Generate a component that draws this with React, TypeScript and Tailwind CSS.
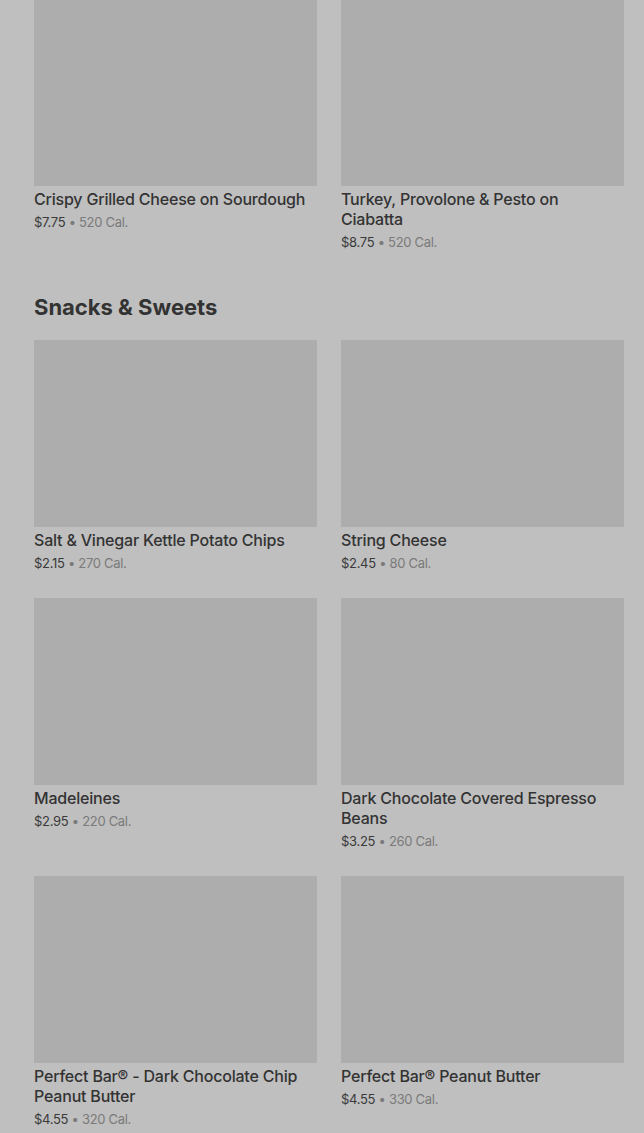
interface Item {
  name: string
  price: string
  cal: string
}

const topItems: Item[] = [
  { name: 'Crispy Grilled Cheese on Sourdough', price: '$7.75', cal: '520 Cal.' },
  { name: 'Turkey, Provolone & Pesto on Ciabatta', price: '$8.75', cal: '520 Cal.' },
]

const snacks: Item[] = [
  { name: 'Salt & Vinegar Kettle Potato Chips', price: '$2.15', cal: '270 Cal.' },
  { name: 'String Cheese', price: '$2.45', cal: '80 Cal.' },
  { name: 'Madeleines', price: '$2.95', cal: '220 Cal.' },
  { name: 'Dark Chocolate Covered Espresso Beans', price: '$3.25', cal: '260 Cal.' },
  { name: 'Perfect Bar® - Dark Chocolate Chip Peanut Butter', price: '$4.55', cal: '320 Cal.' },
  { name: 'Perfect Bar® Peanut Butter', price: '$4.55', cal: '330 Cal.' },
]

function MenuCard({ name, price, cal }: Item) {
  return (
    <div className="flex flex-col pb-px">
      <div className="h-[187px] w-full bg-[#adadad]" />
      <h3 className="mt-[3px] text-[16px] leading-5 font-medium tracking-[-0.2px] text-[#333333]">
        {name}
      </h3>
      <p className="mt-[3px] text-[13px] leading-5 tracking-[-0.3px]">
        <span className="text-[#3a3a3a]">{price}</span>
        <span className="text-[#7a7a7a]"> • {cal}</span>
      </p>
    </div>
  )
}

export default function App() {
  return (
    <div
      className="min-h-[1133px] w-[644px] overflow-hidden bg-[#bfbfbf] pl-[34px] pr-5"
      style={{ fontFamily: 'Inter, "Noto Sans", sans-serif' }}
    >
      <div className="-mt-px grid grid-cols-2 gap-x-6 gap-y-6">
        {topItems.map((item) => (
          <MenuCard key={item.name} {...item} />
        ))}
      </div>

      <h2 className="mt-[38px] mb-[17px] text-[22px] leading-8 font-bold text-[#333333]">
        Snacks &amp; Sweets
      </h2>

      <div className="grid grid-cols-2 gap-x-6 gap-y-6">
        {snacks.map((item) => (
          <MenuCard key={item.name} {...item} />
        ))}
      </div>
    </div>
  )
}
